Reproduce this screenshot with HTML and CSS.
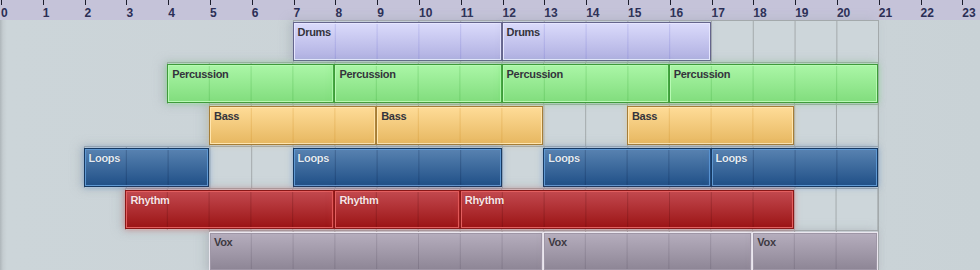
FILE: index.html
```html
<!DOCTYPE html>
<html lang="en">
<head>
    <meta charset="UTF-8">
    <meta name="viewport" content="width=device-width, initial-scale=1.0">
    <title>Arrangement</title>
    <link rel="stylesheet" href="styles.css">
</head>
<body>
    <div class="timeline">
        <div class="ruler">
            <div class="tick"><span>0</span></div>
            <div class="tick"><span>1</span></div>
            <div class="tick"><span>2</span></div>
            <div class="tick"><span>3</span></div>
            <div class="tick"><span>4</span></div>
            <div class="tick"><span>5</span></div>
            <div class="tick"><span>6</span></div>
            <div class="tick"><span>7</span></div>
            <div class="tick"><span>8</span></div>
            <div class="tick"><span>9</span></div>
            <div class="tick"><span>10</span></div>
            <div class="tick"><span>11</span></div>
            <div class="tick"><span>12</span></div>
            <div class="tick"><span>13</span></div>
            <div class="tick"><span>14</span></div>
            <div class="tick"><span>15</span></div>
            <div class="tick"><span>16</span></div>
            <div class="tick"><span>17</span></div>
            <div class="tick"><span>18</span></div>
            <div class="tick"><span>19</span></div>
            <div class="tick"><span>20</span></div>
            <div class="tick"><span>21</span></div>
            <div class="tick"><span>22</span></div>
            <div class="tick"><span>23</span></div>
        </div>

        <div class="tracks">
            <div class="track">
                <div class="lane" style="grid-column: 8 / 22"></div>
                <div class="clip drums" style="grid-column: 8 / 13">Drums</div>
                <div class="clip drums" style="grid-column: 13 / 18">Drums</div>
            </div>

            <div class="track">
                <div class="lane" style="grid-column: 5 / 22"></div>
                <div class="clip percussion" style="grid-column: 5 / 9">Percussion</div>
                <div class="clip percussion" style="grid-column: 9 / 13">Percussion</div>
                <div class="clip percussion" style="grid-column: 13 / 17">Percussion</div>
                <div class="clip percussion" style="grid-column: 17 / 22">Percussion</div>
            </div>

            <div class="track">
                <div class="lane" style="grid-column: 6 / 22"></div>
                <div class="clip bass" style="grid-column: 6 / 10">Bass</div>
                <div class="clip bass" style="grid-column: 10 / 14">Bass</div>
                <div class="clip bass" style="grid-column: 16 / 20">Bass</div>
            </div>

            <div class="track">
                <div class="lane" style="grid-column: 3 / 22"></div>
                <div class="clip loops" style="grid-column: 3 / 6">Loops</div>
                <div class="clip loops" style="grid-column: 8 / 13">Loops</div>
                <div class="clip loops" style="grid-column: 14 / 18">Loops</div>
                <div class="clip loops" style="grid-column: 18 / 22">Loops</div>
            </div>

            <div class="track">
                <div class="lane" style="grid-column: 4 / 22"></div>
                <div class="clip rhythm" style="grid-column: 4 / 9">Rhythm</div>
                <div class="clip rhythm" style="grid-column: 9 / 12">Rhythm</div>
                <div class="clip rhythm" style="grid-column: 12 / 20">Rhythm</div>
            </div>

            <div class="track">
                <div class="lane" style="grid-column: 6 / 22"></div>
                <div class="clip vox" style="grid-column: 6 / 14">Vox</div>
                <div class="clip vox" style="grid-column: 14 / 19">Vox</div>
                <div class="clip vox" style="grid-column: 19 / 22">Vox</div>
            </div>
        </div>
    </div>
</body>
</html>
```

FILE: styles.css
```css
:root {
    --col: calc(878px / 21);
    --grid-line: #a3a9ab;
    --lane-color: #cdd6da;
    --ruler-color: #c5c3d9;
    --ruler-text: #2b2e55;
}

* {
    margin: 0;
    padding: 0;
    box-sizing: border-box;
}

body {
    font-family: "Liberation Sans", Arial, sans-serif;
    background: #cbd4d8;
    overflow: hidden;
}

.timeline {
    width: 980px;
    height: 270px;
    overflow: hidden;
    background:
        linear-gradient(to right, #aeb6ba 0, #c4ccd0 3px, #ccd5d9 7px, #cbd3d7 40%, #ccd5d9 70%, #c9d2d6 100%);
}

/* ruler */

.ruler {
    display: flex;
    height: 20px;
    background: var(--ruler-color);
}

.tick {
    flex: 0 0 var(--col);
    display: flex;
    flex-direction: column;
}

.tick::before {
    content: "";
    display: block;
    width: 1px;
    height: 6px;
    margin-left: 1px;
    background: #1c1d2c;
}

.tick span {
    margin-top: 2px;
    padding-left: 1px;
    font-size: 12px;
    font-weight: bold;
    line-height: 13px;
    color: var(--ruler-text);
}

/* tracks */

.track {
    display: grid;
    grid-template-columns: repeat(21, var(--col));
    grid-template-rows: 42px;
    height: 42px;
}

.lane {
    grid-row: 1;
    margin-right: -1px;
    border-top: 1px solid var(--grid-line);
    border-right: 1px solid var(--grid-line);
    background-color: var(--lane-color);
    background-image: linear-gradient(to right, var(--grid-line) 1px, transparent 1px);
    background-size: var(--col) 100%;
    box-shadow: -4px 0 10px rgba(150, 160, 165, 0.35);
}

.clip {
    grid-row: 1;
    align-self: start;
    height: 39px;
    margin-top: 2px;
    padding: 3px 4px;
    overflow: hidden;
    white-space: nowrap;
    font-size: 11px;
    font-weight: bold;
    line-height: 13px;
    letter-spacing: -0.3px;
    color: #34343c;
    border: 1px solid var(--edge);
    background:
        linear-gradient(to right, var(--line) 1px, transparent 1px) 0 0 / var(--col) 100% border-box,
        linear-gradient(to bottom, var(--top), var(--bottom)) border-box;
    box-shadow: inset 0 0 0 1px var(--shine), 0 0 6px var(--glow);
    z-index: 1;
}

.drums {
    --edge: #65658c;
    --shine: #e6e6ff;
    --top: #dcdcfc;
    --bottom: #aeaee0;
    --line: rgba(60, 60, 190, 0.16);
    --glow: rgba(150, 150, 200, 0.25);
}

.percussion {
    --edge: #3e9a3a;
    --shine: #b8fab4;
    --top: #acf7a8;
    --bottom: #80dc7c;
    --line: rgba(20, 140, 20, 0.2);
    --glow: rgba(90, 220, 90, 0.5);
}

.bass {
    --edge: #a57d36;
    --shine: #ffe6b0;
    --top: #ffdd99;
    --bottom: #e6b65f;
    --line: rgba(200, 130, 20, 0.25);
    --glow: rgba(230, 180, 90, 0.35);
}

.loops {
    --edge: #173a63;
    --shine: #5e98d3;
    --top: #5a84b2;
    --bottom: #1e4e86;
    --line: rgba(0, 20, 60, 0.25);
    --glow: rgba(60, 120, 200, 0.5);
    color: #e4ecf5;
    text-shadow: 0 0 1px rgba(0, 20, 50, 0.6);
}

.rhythm {
    --edge: #8a1717;
    --shine: #e35f5f;
    --top: #c44b51;
    --bottom: #9a1213;
    --line: rgba(60, 0, 0, 0.22);
    --glow: rgba(220, 60, 60, 0.5);
    color: #fbe4e6;
    text-shadow: 0 0 1px rgba(80, 0, 0, 0.6);
}

.vox {
    --edge: #ebe7ef;
    --shine: #9e96a6;
    --top: #b7afbf;
    --bottom: #8c8494;
    --line: rgba(40, 30, 50, 0.15);
    --glow: rgba(160, 150, 170, 0.3);
    color: #3d3a42;
}
```
